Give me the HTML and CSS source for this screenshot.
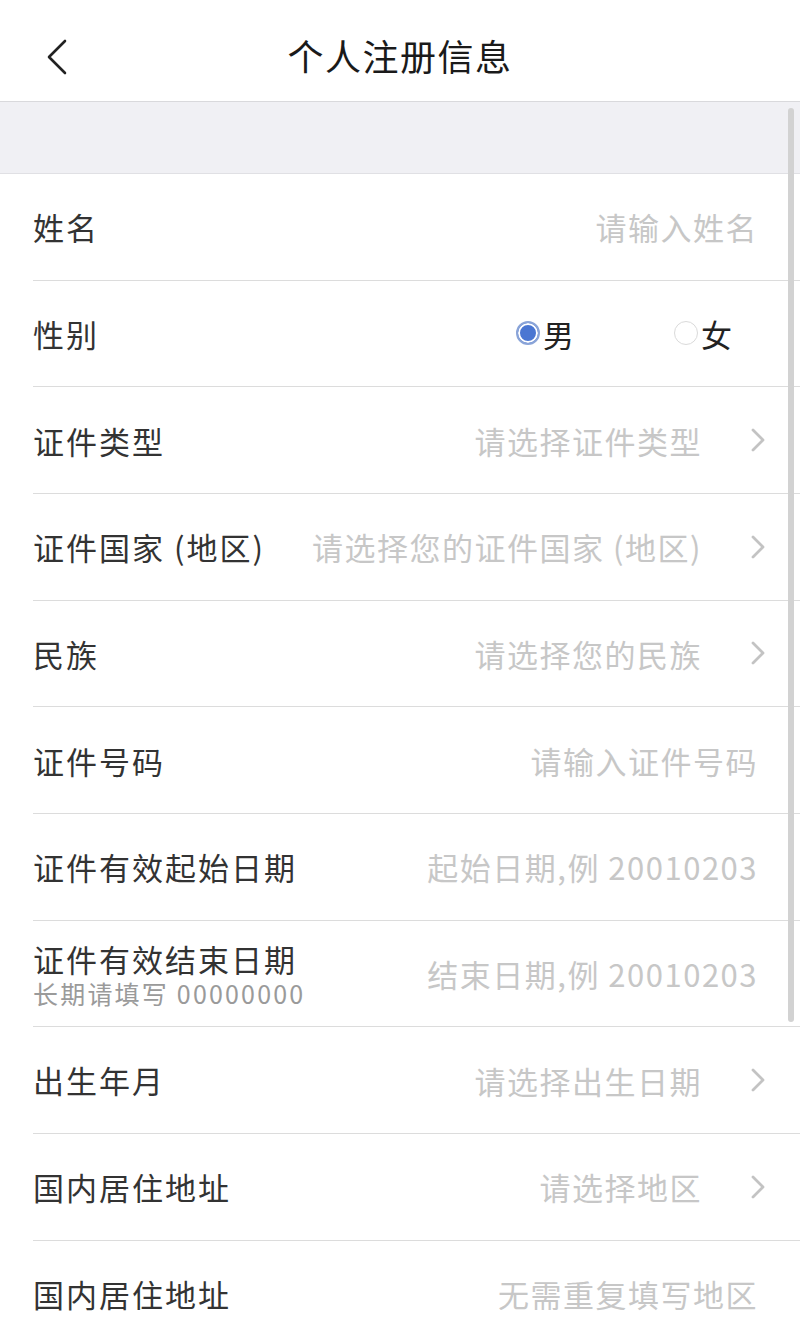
FILE: index.html
```html
<!DOCTYPE html>
<html lang="zh-CN">
<head>
<meta charset="utf-8">
<title>个人注册信息</title>
<link rel="stylesheet" href="styles.css">
</head>
<body>
<div class="page">
  <header class="nav">
    <svg class="back" width="24" height="36" viewBox="0 0 24 36"><polyline points="20,2 4,18 20,34" fill="none" stroke="#222" stroke-width="2.6" stroke-linecap="round" stroke-linejoin="round"/></svg>
    <h1 class="title">个人注册信息</h1>
  </header>
  <div class="band"></div>
  <main class="form">
    <div class="row"><span class="label">姓名</span><span class="ph">请输入姓名</span></div>
    <div class="row"><span class="label">性别</span>
      <span class="radios">
        <span class="radio"><span class="dot on"></span>男</span>
        <span class="radio"><span class="dot"></span>女</span>
      </span>
    </div>
    <div class="row"><span class="label">证件类型</span><span class="ph">请选择证件类型</span><svg class="chev" viewBox="0 0 16 26"><polyline points="3,3 13,13 3,23" fill="none" stroke="#c3c3c3" stroke-width="2.8" stroke-linecap="round" stroke-linejoin="round"/></svg></div>
    <div class="row"><span class="label">证件国家 (地区)</span><span class="ph">请选择您的证件国家 (地区)</span><svg class="chev" viewBox="0 0 16 26"><polyline points="3,3 13,13 3,23" fill="none" stroke="#c3c3c3" stroke-width="2.8" stroke-linecap="round" stroke-linejoin="round"/></svg></div>
    <div class="row"><span class="label">民族</span><span class="ph">请选择您的民族</span><svg class="chev" viewBox="0 0 16 26"><polyline points="3,3 13,13 3,23" fill="none" stroke="#c3c3c3" stroke-width="2.8" stroke-linecap="round" stroke-linejoin="round"/></svg></div>
    <div class="row"><span class="label">证件号码</span><span class="ph">请输入证件号码</span></div>
    <div class="row"><span class="label">证件有效起始日期</span><span class="ph">起始日期,例 20010203</span></div>
    <div class="row"><span class="labelbox"><span class="label">证件有效结束日期</span><span class="sub">长期请填写 00000000</span></span><span class="ph">结束日期,例 20010203</span></div>
    <div class="row"><span class="label">出生年月</span><span class="ph">请选择出生日期</span><svg class="chev" viewBox="0 0 16 26"><polyline points="3,3 13,13 3,23" fill="none" stroke="#c3c3c3" stroke-width="2.8" stroke-linecap="round" stroke-linejoin="round"/></svg></div>
    <div class="row"><span class="label">国内居住地址</span><span class="ph">请选择地区</span><svg class="chev" viewBox="0 0 16 26"><polyline points="3,3 13,13 3,23" fill="none" stroke="#c3c3c3" stroke-width="2.8" stroke-linecap="round" stroke-linejoin="round"/></svg></div>
    <div class="row last"><span class="label">国内居住地址</span><span class="ph">无需重复填写地区</span></div>
  </main>
  <div class="scrollbar"></div>
</div>
</body>
</html>
```
FILE: styles.css
```css
* { box-sizing: border-box; margin: 0; padding: 0; }
html, body { width: 800px; height: 1339px; overflow: hidden; background: #fff; }
body {
  font-family: "Noto Sans CJK SC", "Noto Sans", sans-serif;
  color: #333;
}
.page { position: relative; height: 1339px; }
.nav {
  height: 102px;
  border-bottom: 1px solid #d9d9dc;
  display: flex;
  align-items: center;
  justify-content: center;
  position: relative;
  background: #fff;
}
.back { position: absolute; left: 45px; top: 39px; }
.title {
  font-size: 36px;
  font-weight: 400;
  color: #1a1a1a;
  letter-spacing: 1.5px;
  line-height: 1;
  margin-top: 8px;
}
.band {
  height: 72px;
  background: #f0f0f4;
  border-bottom: 1px solid #e0e0e4;
}
.form { padding-left: 33px; }
.row {
  height: 106.67px;
  border-bottom: 1px solid #dcdcdc;
  display: flex;
  align-items: center;
  padding-right: 34px;
}
.row.last { border-bottom: none; }
.label {
  font-size: 31px;
  letter-spacing: 2px;
  color: #333;
  white-space: nowrap;
  line-height: 1.2;
}
.labelbox { display: flex; flex-direction: column; gap: 3px; padding-top: 2px; }
.labelbox .label { line-height: 1.15; }
.sub {
  font-size: 25px;
  letter-spacing: 2.2px;
  color: #9a9a9a;
  line-height: 1.1;
  white-space: nowrap;
}
.ph {
  margin-left: auto;
  margin-right: 8px;
  font-size: 31px;
  letter-spacing: 1.5px;
  color: #c7c7c7;
  white-space: nowrap;
}
.chev {
  width: 16px;
  height: 26px;
  margin-left: 40px;
}
.radios {
  margin-left: auto;
  display: flex;
  gap: 100px;
  margin-right: 34px;
}
.radio {
  display: flex;
  align-items: center;
  font-size: 31px;
  color: #222;
  gap: 3px;
}
.dot {
  width: 24px;
  height: 24px;
  border-radius: 50%;
  border: 1.5px solid #dadada;
  background: #fff;
}
.dot.on {
  border: 2px solid #8aa4d8;
  background: #4a76d2;
  box-shadow: inset 0 0 0 2px #fff;
}
.scrollbar {
  position: absolute;
  left: 788px;
  top: 108px;
  width: 6px;
  height: 914px;
  border-radius: 3px;
  background: #d2d2d2;
}
```
